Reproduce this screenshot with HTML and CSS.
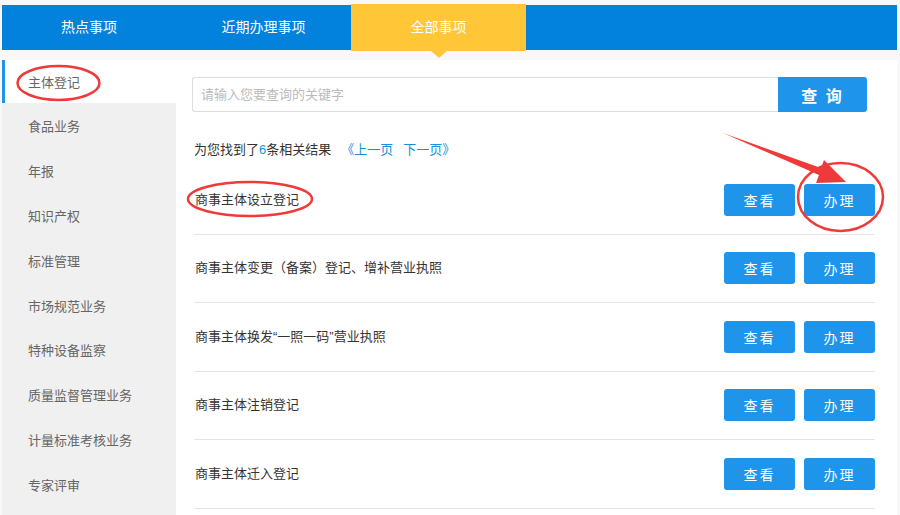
FILE: index.html
```html
<!DOCTYPE html>
<html>
  <head>
    <meta charset="utf-8">
    <title>全部事项</title>
    <link rel="stylesheet" href="styles.css">
  </head>
  <body>
    <div class="page">
      <div class="tabs">
        <a class="tab">热点事项</a>
        <a class="tab">近期办理事项</a>
        <a class="tab active">全部事项</a>
      </div>
      <div class="main">
        <ul class="side">
          <li class="on">主体登记</li>
          <li>食品业务</li>
          <li>年报</li>
          <li>知识产权</li>
          <li>标准管理</li>
          <li>市场规范业务</li>
          <li>特种设备监察</li>
          <li>质量监督管理业务</li>
          <li>计量标准考核业务</li>
          <li>专家评审</li>
        </ul>
        <div class="content">
          <div class="search">
            <input type="text" placeholder="请输入您要查询的关键字">
            <button>查 询</button>
          </div>
          <p class="summary">为您找到了<em>6</em>条相关结果<a>《上一页</a><a>下一页》</a></p>
          <ul class="list">
            <li>
              <span>商事主体设立登记</span>
              <div class="ops"><button>查看</button><button>办理</button></div>
            </li>
            <li>
              <span>商事主体变更（备案）登记、增补营业执照</span>
              <div class="ops"><button>查看</button><button>办理</button></div>
            </li>
            <li>
              <span>商事主体换发“一照一码”营业执照</span>
              <div class="ops"><button>查看</button><button>办理</button></div>
            </li>
            <li>
              <span>商事主体注销登记</span>
              <div class="ops"><button>查看</button><button>办理</button></div>
            </li>
            <li>
              <span>商事主体迁入登记</span>
              <div class="ops"><button>查看</button><button>办理</button></div>
            </li>
          </ul>
        </div>
      </div>
      <!-- red marks drawn on the screenshot -->
      <svg class="marks" width="900" height="515" viewBox="0 0 900 515">
        <g fill="none" stroke="#ef3a3a" stroke-width="2.5">
          <ellipse cx="58.5" cy="83" rx="41" ry="17"/>
          <ellipse cx="250" cy="199" rx="62" ry="17"/>
          <ellipse cx="840.5" cy="197" rx="42.5" ry="34"/>
        </g>
        <polygon fill="#ef3a3a" points="723,133 821,168 824,160 846,182 816,183 819,175"/>
      </svg>
    </div>
  </body>
</html>
```

FILE: styles.css
```css
html, body{
  margin:0;
  padding:0;
  background:#f8f8f8;
}
body{
  font-family:"Liberation Sans", "Noto Sans CJK SC", sans-serif;
  font-size:13px;
  color:#333;
}
ul{
  list-style:none;
  margin:0;
  padding:0;
}
.page{
  position:relative;
  width:895px;
  height:515px;
  margin-left:2px;
  padding-top:5px;
  box-sizing:border-box;
  overflow:hidden;
}
.tabs{
  display:flex;
  height:45px;
  background:#0282dd;
}
.tab{
  position:relative;
  width:175px;
  height:45px;
  line-height:45px;
  text-align:center;
  font-size:14px;
  color:#fff;
}
.tab:first-child{
  width:174px;
}
.tab.active{
  height:47px;
  margin-top:-1px;
  line-height:47px;
  background:#ffc638;
}
.tab.active::after{
  content:"";
  position:absolute;
  left:50%;
  top:47px;
  margin-left:-8px;
  border-left:8px solid transparent;
  border-right:8px solid transparent;
  border-top:7px solid #ffc638;
}
.main{
  display:flex;
  margin-top:10px;
  height:455px;
  background:#fff;
}
.side{
  width:174px;
  flex:none;
  background:#f0f0f0;
}
.side li{
  box-sizing:border-box;
  height:44.9px;
  line-height:44.9px;
  padding:2px 0 0 26px;
  color:#666;
}
.side li.on{
  height:43px;
  line-height:43px;
  padding:1px 0 0 23px;
  background:#fff;
  border-left:3px solid #1f94eb;
}
.content{
  flex:1;
  padding:17px 22px 0 16px;
}
.search{
  display:flex;
  height:35px;
  margin-right:8px;
}
.search input{
  flex:1;
  height:35px;
  box-sizing:border-box;
  border:1px solid #ddd;
  border-right:none;
  border-radius:3px 0 0 3px;
  padding:0 8px;
  font-family:inherit;
  font-size:13px;
  outline:none;
}
.search input::placeholder{
  color:#bbb;
}
.search button{
  width:89px;
  height:35px;
  border:none;
  border-radius:0 3px 3px 0;
  background:#1f94eb;
  color:#fff;
  font-family:inherit;
  font-size:16px;
  font-weight:bold;
  letter-spacing:2px;
}
.summary{
  margin:28px 0 6px;
  padding-left:2px;
  line-height:20px;
}
.summary em{
  font-style:normal;
  color:#1a8fdd;
}
.summary a{
  margin-left:10px;
  color:#1a8fdd;
}
.list{
  margin-left:2px;
}
.list li{
  display:flex;
  align-items:center;
  justify-content:space-between;
  height:67.5px;
  border-bottom:1px solid #e5e5e5;
}
.list li span{
  margin-top:-3px;
  padding-left:1px;
}
.ops{
  display:flex;
  gap:9px;
}
.ops button{
  width:71px;
  height:32px;
  border:none;
  border-radius:3px;
  background:#1f94eb;
  color:#fff;
  font-family:inherit;
  font-size:14px;
  letter-spacing:2px;
}
.marks{
  position:absolute;
  left:-2px;
  top:0;
  pointer-events:none;
}
```
